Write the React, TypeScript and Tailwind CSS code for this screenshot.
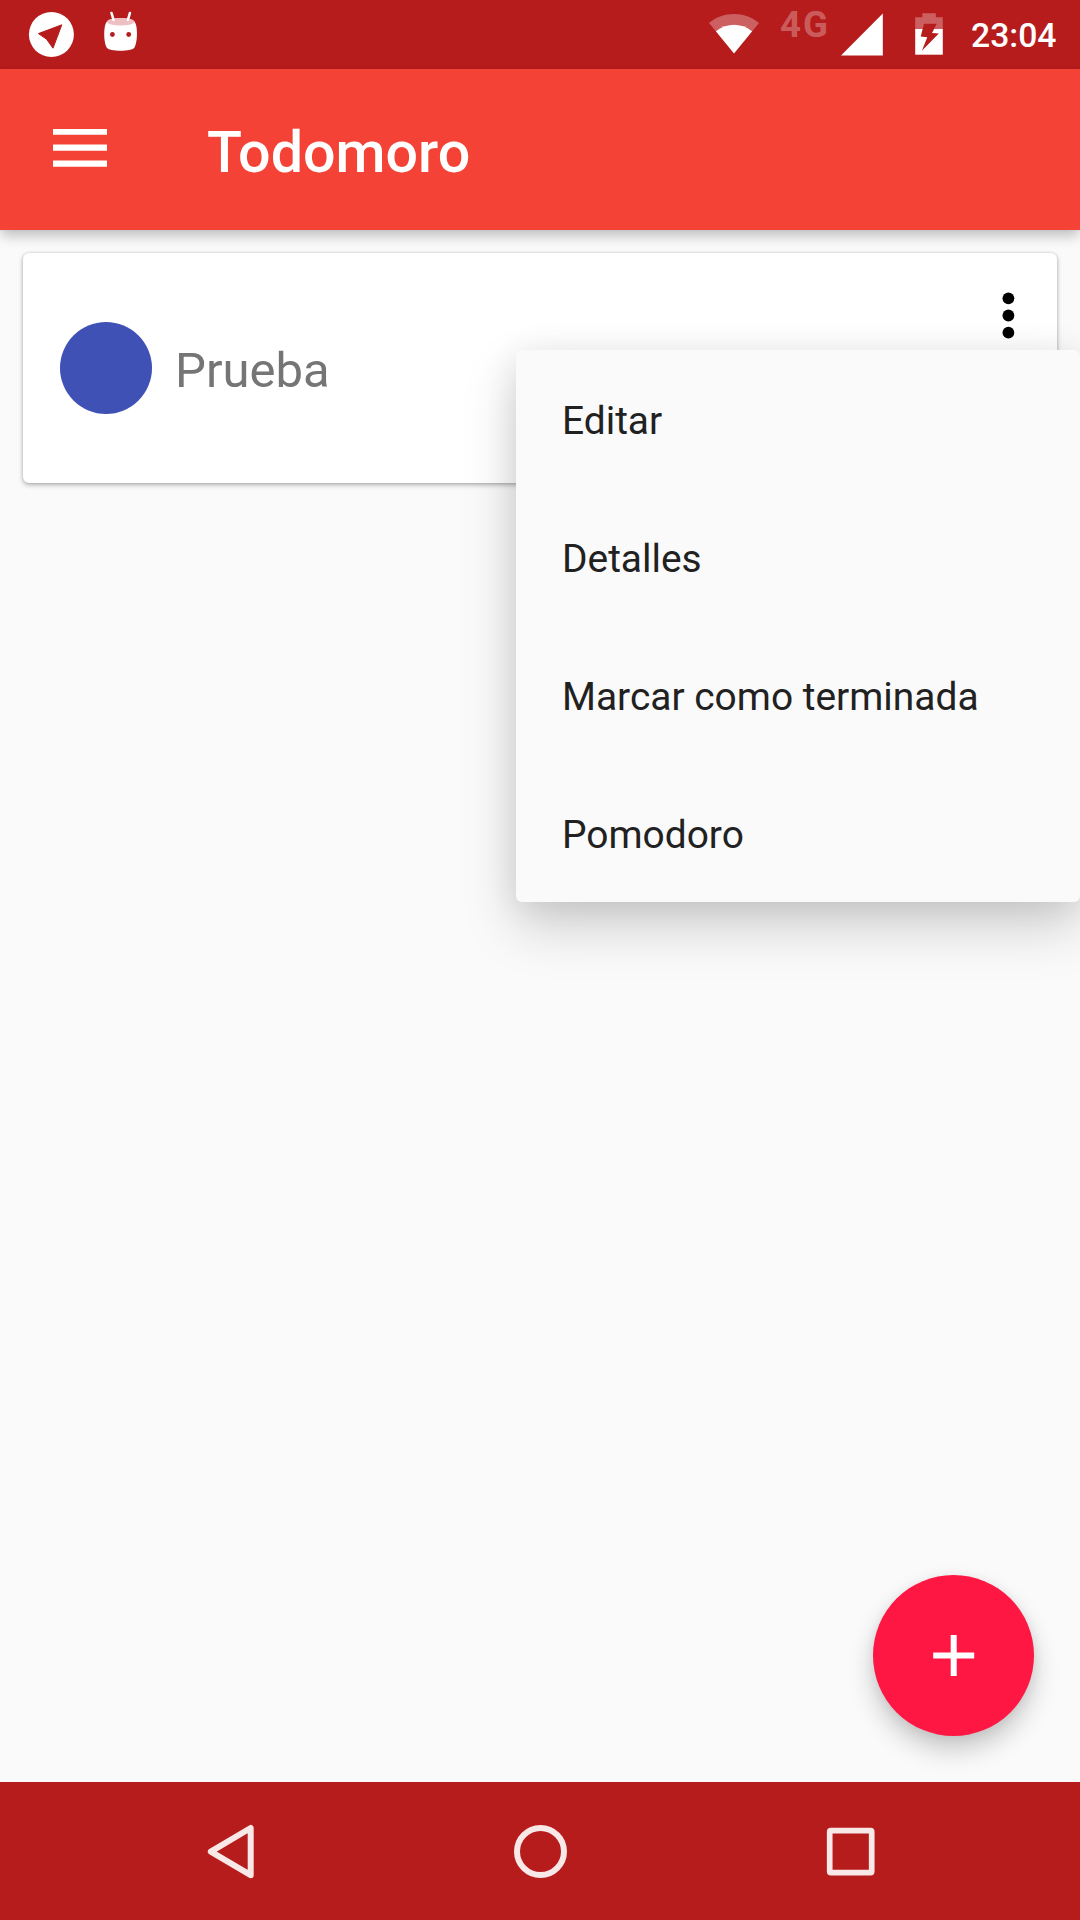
const menuItems = ['Editar', 'Detalles', 'Marcar como terminada', 'Pomodoro'];

function StatusBar() {
  return (
    <div className="flex h-[69px] shrink-0 items-start bg-[#b71c1c] pl-7 pr-[23px]">
      <svg className="h-[69px] w-[48px]" viewBox="28 0 48 69">
        <circle cx="51.4" cy="34.5" r="22.5" fill="#fff" />
        <path d="M61.8 24.8 L38.4 33.6 L46.6 39.2 L53 48.2 Z" fill="#b71c1c" stroke="#b71c1c" strokeWidth="1" strokeLinejoin="round" />
      </svg>
      <svg className="ml-6 h-[69px] w-[42px]" viewBox="100 0 42 69">
        <path d="M107 21.5 C111 17 130.5 17 134.3 21.5 C138 25 137.8 42 134.5 47.5 C132 51.8 109 51.8 106.7 47.5 C103.5 42 103.3 25 107 21.5 Z" fill="#fff" />
        <ellipse cx="120.7" cy="21.7" rx="13.7" ry="3.8" fill="#eebfc3" />
        <path d="M111.5 13 L113.6 20 M129.9 13 L127.9 20" stroke="#fff" strokeWidth="2.6" strokeLinecap="round" />
        <circle cx="112.4" cy="34.5" r="2.4" fill="#b71c1c" />
        <circle cx="128.7" cy="34.5" r="2.4" fill="#b71c1c" />
      </svg>
      <div className="ml-auto flex items-start">
        <svg className="h-[69px] w-[56px]" viewBox="706 0 56 69">
          <path d="M715.8 31.3 L709 23 C723 11 745 11 759 23 L752.2 31.3 C742 22.7 726 22.7 715.8 31.3 Z" fill="#fff" fillOpacity="0.3" />
          <path d="M734 53.6 L715.8 31.3 C726 22.7 742 22.7 752.2 31.3 Z" fill="#fff" />
        </svg>
        <span className="ml-[18px] mt-[4px] w-[58px] text-[36.5px] font-bold leading-[42px] tracking-[2px] text-white/30">4G</span>
        <svg className="h-[69px] w-[50px]" viewBox="838 0 50 69">
          <path d="M841 55.6 L882.8 13.5 V55.6 Z" fill="#fff" />
        </svg>
        <svg className="ml-[22px] h-[69px] w-[38px]" viewBox="910 0 38 69">
          <path d="M915.2 29 V17.3 H922.3 V13.2 H935.8 V17.3 H942.8 V29 Z" fill="#fff" fillOpacity="0.3" />
          <path d="M915.2 29 H942.8 V54.7 H915.2 Z" fill="#fff" />
          <path d="M924 23.8 H936.7 L932 32.9 L938.8 33.5 L921.9 50.7 L927.3 37.3 L920.7 36.5 Z" fill="#b71c1c" />
        </svg>
        <span className="ml-[23px] mt-[15px] w-[86px] pr-px text-right text-[33.7px] font-medium leading-[42px] text-white">23:04</span>
      </div>
    </div>
  );
}

function Toolbar() {
  return (
    <header className="relative flex h-[161px] shrink-0 items-center bg-[#f44336] pl-[53px] shadow-[0_7px_12px_-1px_rgba(0,0,0,0.23),0_0_4px_rgba(0,0,0,0.06)]">
      <svg className="mb-[2px] h-[40px] w-[54px]" viewBox="53 129.5 54 40">
        <path d="M53 132.1 h54 M53 148.1 h54 M53 164.1 h54" stroke="#fff" strokeWidth="6.2" />
      </svg>
      <h1 className="ml-[100px] mt-[7px] text-[57.4px] font-medium leading-[68px] text-white">Todomoro</h1>
    </header>
  );
}

function TaskCard() {
  return (
    <article className="mx-[23px] mt-[23px] flex h-[230px] items-center rounded-[6px] bg-white pl-[37px] shadow-[0_2px_5px_rgba(0,0,0,0.28),0_0_3px_rgba(0,0,0,0.14)]">
      <div className="size-[92px] rounded-full bg-[#3f51b5]" />
      <span className="ml-[23px] mt-[5px] text-[49px] leading-[60px] text-[#757575]">Prueba</span>
      <svg className="ml-auto mr-[40px] mt-[34px] h-[60px] w-[17px] self-start" viewBox="1000 287 17 60">
        <circle cx="1008.4" cy="298.3" r="5.9" />
        <circle cx="1008.4" cy="315.5" r="5.9" />
        <circle cx="1008.4" cy="332.7" r="5.9" />
      </svg>
    </article>
  );
}

function PopupMenu() {
  return (
    <ul className="absolute right-0 top-[350px] w-[564px] rounded-[6px] bg-[#fafafa] shadow-[0_24px_54px_rgba(0,0,0,0.18),0_4px_32px_rgba(0,0,0,0.08)]">
      {menuItems.map((item) => (
        <li key={item} className="flex h-[138px] items-center px-[46px] pt-[4px] text-[38.9px] leading-[48px] text-[#212121]">
          {item}
        </li>
      ))}
    </ul>
  );
}

function NavigationBar() {
  return (
    <nav className="flex h-[138px] shrink-0 items-center bg-[#b71c1c] pl-[200px] pr-[200px]">
      <svg className="h-[60px] w-[60px]" viewBox="200 1821 60 60">
        <path d="M250.7 1828 V1875.2 L210.8 1851.6 Z" fill="none" stroke="#f8e8e8" strokeWidth="6" strokeLinejoin="round" />
      </svg>
      <svg className="ml-[250px] h-[60px] w-[60px]" viewBox="510 1821 60 60">
        <circle cx="540.5" cy="1851.5" r="23.5" fill="none" stroke="#f8e8e8" strokeWidth="6" />
      </svg>
      <svg className="ml-[250px] h-[60px] w-[60px]" viewBox="820 1821 60 60">
        <rect x="829.7" y="1830.7" width="42" height="42" rx="1.2" fill="none" stroke="#f8e8e8" strokeWidth="5.7" />
      </svg>
    </nav>
  );
}

export default function App() {
  return (
    <div className="relative flex h-[1920px] w-[1080px] flex-col overflow-hidden bg-[#fafafa] font-['Roboto',sans-serif]">
      <StatusBar />
      <Toolbar />
      <main className="flex-1">
        <TaskCard />
      </main>
      <PopupMenu />
      <button aria-label="Añadir tarea" className="absolute bottom-[184px] right-[46px] flex size-[161px] items-center justify-center rounded-full bg-[#ff1744] shadow-[0_14px_26px_rgba(0,0,0,0.2),0_2px_12px_rgba(0,0,0,0.07)]">
        <svg className="size-[69px]" viewBox="0 0 69 69">
          <path d="M14.2 34.5 h41 M34.7 14 v41" stroke="#fff" strokeWidth="6" />
        </svg>
      </button>
      <NavigationBar />
    </div>
  );
}
